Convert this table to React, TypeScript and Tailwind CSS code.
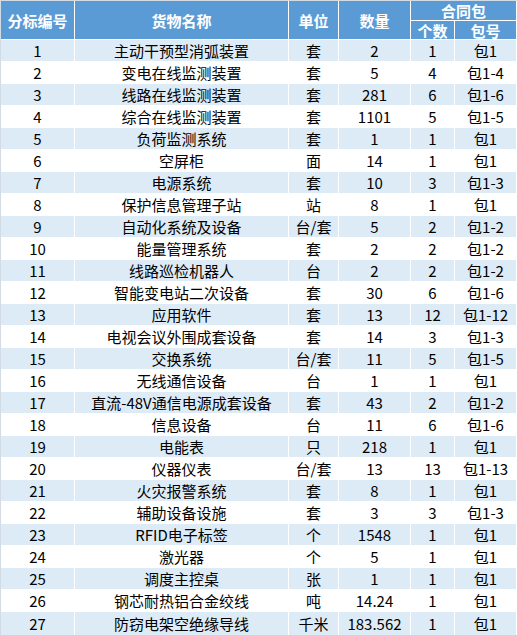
const rows: [string, string, string, string, string, string][] = [
  ['1', '主动干预型消弧装置', '套', '2', '1', '包1'],
  ['2', '变电在线监测装置', '套', '5', '4', '包1-4'],
  ['3', '线路在线监测装置', '套', '281', '6', '包1-6'],
  ['4', '综合在线监测装置', '套', '1101', '5', '包1-5'],
  ['5', '负荷监测系统', '套', '1', '1', '包1'],
  ['6', '空屏柜', '面', '14', '1', '包1'],
  ['7', '电源系统', '套', '10', '3', '包1-3'],
  ['8', '保护信息管理子站', '站', '8', '1', '包1'],
  ['9', '自动化系统及设备', '台/套', '5', '2', '包1-2'],
  ['10', '能量管理系统', '套', '2', '2', '包1-2'],
  ['11', '线路巡检机器人', '台', '2', '2', '包1-2'],
  ['12', '智能变电站二次设备', '套', '30', '6', '包1-6'],
  ['13', '应用软件', '套', '13', '12', '包1-12'],
  ['14', '电视会议外围成套设备', '套', '14', '3', '包1-3'],
  ['15', '交换系统', '台/套', '11', '5', '包1-5'],
  ['16', '无线通信设备', '台', '1', '1', '包1'],
  ['17', '直流-48V通信电源成套设备', '套', '43', '2', '包1-2'],
  ['18', '信息设备', '台', '11', '6', '包1-6'],
  ['19', '电能表', '只', '218', '1', '包1'],
  ['20', '仪器仪表', '台/套', '13', '13', '包1-13'],
  ['21', '火灾报警系统', '套', '8', '1', '包1'],
  ['22', '辅助设备设施', '套', '3', '3', '包1-3'],
  ['23', 'RFID电子标签', '个', '1548', '1', '包1'],
  ['24', '激光器', '个', '5', '1', '包1'],
  ['25', '调度主控桌', '张', '1', '1', '包1'],
  ['26', '钢芯耐热铝合金绞线', '吨', '14.24', '1', '包1'],
  ['27', '防窃电架空绝缘导线', '千米', '183.562', '1', '包1'],
];

const head = 'flex items-center justify-center bg-[#5b9bd5] text-white font-bold';

export default function App() {
  return (
    <div
      className="w-[517px] bg-white text-[15px] leading-none text-black"
      style={{ fontFamily: '"Noto Sans CJK SC", "Noto Sans", sans-serif' }}
    >
      <div className="border-t border-l border-[#d3dbe4] pr-px">
        <div className="grid grid-cols-[73px_213px_49px_71px_43px_61px] grid-rows-[19px_18px_repeat(26,21px)_23px] gap-px bg-white">
          <div className={`${head} row-span-2`}>分标编号</div>
          <div className={`${head} row-span-2`}>货物名称</div>
          <div className={`${head} row-span-2`}>单位</div>
          <div className={`${head} row-span-2`}>数量</div>
          <div className={`${head} col-span-2`}>合同包</div>
          <div className={head}>个数</div>
          <div className={head}>包号</div>
          {rows.map((r, i) =>
            r.map((c, j) => (
              <div
                key={`${i}-${j}`}
                className={`flex items-center justify-center whitespace-nowrap ${
                  i % 2 === 0 ? 'bg-[#ddebf7]' : 'bg-white'
                }`}
              >
                {c}
              </div>
            ))
          )}
        </div>
      </div>
    </div>
  );
}
